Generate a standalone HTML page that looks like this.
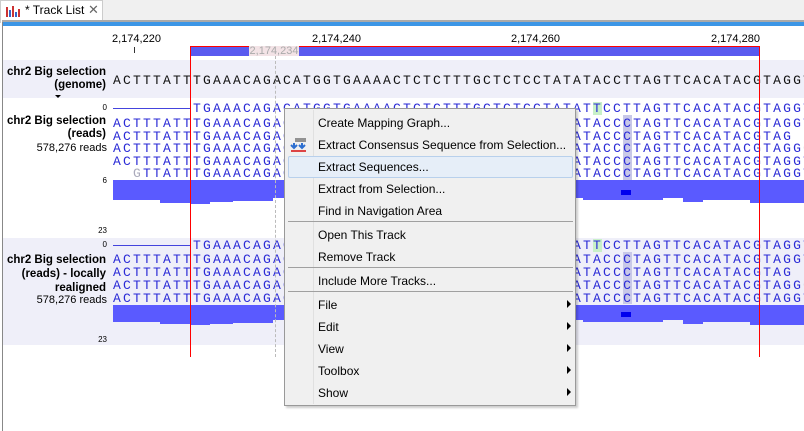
<!DOCTYPE html>
<html><head><style>
*{margin:0;padding:0;box-sizing:border-box}
body{width:804px;height:431px;overflow:hidden;background:#fff;font-family:"Liberation Sans",sans-serif;position:relative}
.a{position:absolute}
.seq{position:absolute;font-family:"Liberation Mono",monospace;font-size:13px;letter-spacing:2.2px;white-space:pre;line-height:13px;color:#2a2ad6}
.lbl{position:absolute;right:698px;text-align:right;font-size:11.5px;font-weight:bold;white-space:nowrap;line-height:13px}
.n{position:absolute;font-size:8px;right:697px;text-align:right;line-height:9px}
.r{position:absolute;font-size:11px;top:33px;line-height:12px}
.mi{position:absolute;left:318px;font-size:12px;color:#000;line-height:14px}
.sep{position:absolute;left:288px;width:285px;height:1px;background:#a0a0a0}
.ar{position:absolute;left:567px;width:0;height:0;border-left:4px solid #000;border-top:4px solid transparent;border-bottom:4px solid transparent}
</style></head><body>
<div class="a" style="left:0;top:0;width:804px;height:22px;background:#f0f0f0"></div>
<div class="a" style="left:0;top:0;width:103px;height:23px;background:#fff;border:1px solid #ccc;border-bottom:none"></div>
<svg class="a" style="left:5px;top:4px" width="16" height="14"><rect x="1" y="3" width="2" height="10" fill="#c33"/><rect x="4" y="6" width="2" height="7" fill="#36c"/><rect x="7" y="2" width="2" height="11" fill="#c33"/><rect x="10" y="8" width="2" height="5" fill="#36c"/><rect x="13" y="5" width="2" height="8" fill="#c33"/></svg>
<div class="a" style="left:25px;top:3px;font-size:12px;line-height:15px">* Track List</div>
<div class="a" style="left:88px;top:2px;font-size:13px;color:#666">✕</div>
<div class="a" style="left:2px;top:20px;width:802px;height:2px;background:#aaa"></div>
<div class="a" style="left:3px;top:22px;width:801px;height:4px;background:#3c96e6"></div>
<div class="a" style="left:2px;top:22px;width:1px;height:409px;background:#888"></div>

<div class="r" style="left:112px">2,174,220</div>
<div class="r" style="left:312px">2,174,240</div>
<div class="r" style="left:511px">2,174,260</div>
<div class="r" style="left:711px">2,174,280</div>
<div class="a" style="left:134px;top:47px;width:1px;height:6px;background:#333"></div>
<div class="a" style="left:190px;top:46px;width:570px;height:10px;background:#5a5aef;border-top:1px solid red"></div>
<div class="a" style="left:249px;top:46px;width:50px;height:10px;background:#f3e3e6;color:#aaa;font-size:11px;line-height:10px;text-align:center">2,174,234</div>

<div class="a" style="left:3px;top:60px;width:801px;height:38px;background:#efeff9"></div>
<div class="lbl" style="top:66px">chr2 Big selection<br>(genome)</div>
<div class="a" style="left:55px;top:95px;border-left:3px solid transparent;border-right:3px solid transparent;border-top:3px solid #000"></div>
<div class="seq" style="left:113px;top:74px;color:#111">ACTTTATTTGAAACAGACATGGTGAAAACTCTCTTTGCTCTCCTATATACCTTAGTTCACATACGTAGGT</div>

<div class="n" style="top:103px">0</div>
<div class="a" style="left:113px;top:108px;width:77px;height:1px;background:#4444dd"></div>
<div class="a" style="left:593px;top:102px;width:9px;height:13px;background:#c8f0c8"></div>
<div class="a" style="left:623px;top:115px;width:9px;height:65px;background:#c8c8e8"></div>
<div class="seq" style="left:193px;top:102px">TGAAACAGACATGGTGAAAACTCTCTTTGCTCTCCTATATTCCTTAGTTCACATACGTAGGT</div>
<div class="lbl" style="top:115px">chr2 Big selection<br>(reads)</div>
<div class="a" style="font-size:11px;right:697px;top:142px">578,276 reads</div>
<div class="seq" style="left:113px;top:117px">ACTTTATTTGAAACAGACATGGTGAAAACTCTCTTTGCTCTCCTATATACCCTAGTTCACATACGTAGGT</div>
<div class="seq" style="left:113px;top:130px">ACTTTATTTGAAACAGACATGGTGAAAACTCTCTTTGCTCTCCTATATACCCTAGTTCACATACGTAG</div>
<div class="seq" style="left:113px;top:142px">ACTTTATTTGAAACAGACATGGTGAAAACTCTCTTTGCTCTCCTATATACCCTAGTTCACATACGTAGG<span style="color:#aab">C</span></div>
<div class="seq" style="left:113px;top:155px">ACTTTATTTGAAACAGACATGGTGAAAACTCTCTTTGCTCTCCTATATACCCTAGTTCACATACGTAGGT</div>
<div class="seq" style="left:133px;top:167px"><span style="color:#aab">G</span>TTATTTGAAACAGACATGGTGAAAACTCTCTTTGCTCTCCTATATACCCTAGTTCACATACGTAGGT</div>
<div class="n" style="top:176px">6</div>
<svg class="a" style="left:113px;top:180px" width="691" height="26"><polygon fill="#5a5aff" points="0,0 691,0 691,23 637,23 637,20 590,20 590,22 570,22 570,18 550,18 550,20 470,20 470,18 160,18 160,21 120,21 120,22 97,22 97,24 77,24 77,23 47,23 47,20 0,20"/><rect x="508" y="10" width="10" height="5" fill="#0000ee"/></svg>
<div class="n" style="top:226px">23</div>

<div class="a" style="left:3px;top:238px;width:801px;height:107px;background:#efeff9"></div>
<div class="n" style="top:240px">0</div>
<div class="a" style="left:113px;top:245px;width:77px;height:1px;background:#4444dd"></div>
<div class="a" style="left:593px;top:239px;width:9px;height:13px;background:#c8f0c8"></div>
<div class="a" style="left:623px;top:252px;width:9px;height:52px;background:#c8c8e8"></div>
<div class="seq" style="left:193px;top:239px">TGAAACAGACATGGTGAAAACTCTCTTTGCTCTCCTATATTCCTTAGTTCACATACGTAGGT</div>
<div class="lbl" style="top:253px;line-height:14px">chr2 Big selection<br>(reads) - locally<br>realigned</div>
<div class="a" style="font-size:11px;right:697px;top:294px">578,276 reads</div>
<div class="seq" style="left:113px;top:253px">ACTTTATTTGAAACAGACATGGTGAAAACTCTCTTTGCTCTCCTATATACCCTAGTTCACATACGTAGGT</div>
<div class="seq" style="left:113px;top:266px">ACTTTATTTGAAACAGACATGGTGAAAACTCTCTTTGCTCTCCTATATACCCTAGTTCACATACGTAG</div>
<div class="seq" style="left:113px;top:279px">ACTTTATTTGAAACAGACATGGTGAAAACTCTCTTTGCTCTCCTATATACCCTAGTTCACATACGTAGG<span style="color:#aab">C</span></div>
<div class="seq" style="left:113px;top:292px">ACTTTATTTGAAACAGACATGGTGAAAACTCTCTTTGCTCTCCTATATACCCTAGTTCACATACGTAGGT</div>
<svg class="a" style="left:113px;top:305px" width="691" height="22"><polygon fill="#5a5aff" points="0,0 691,0 691,20 637,20 637,17 590,17 590,19 570,19 570,15 550,15 550,17 470,17 470,15 160,15 160,18 120,18 120,19 97,19 97,20 77,20 77,19 47,19 47,17 0,17"/><rect x="508" y="7" width="10" height="5" fill="#0000ee"/></svg>
<div class="n" style="top:335px">23</div>

<div class="a" style="left:190px;top:46px;width:1px;height:311px;background:#f00"></div>
<div class="a" style="left:759px;top:46px;width:1px;height:311px;background:#f00"></div>
<div class="a" style="left:275px;top:56px;width:0;height:301px;border-left:1px dashed #bbb"></div>

<div class="a" style="left:284px;top:108px;width:292px;height:298px;background:#f0f0f0;border:1px solid #999;box-shadow:2px 2px 2px rgba(0,0,0,.2)"></div>
<div class="a" style="left:313px;top:110px;width:1px;height:294px;background:#e0e0e0"></div>
<div class="a" style="left:288px;top:156px;width:285px;height:22px;background:#e6eef8;border:1px solid #b8d0ec;border-radius:2px"></div>
<svg class="a" style="left:290px;top:137px" width="18" height="16"><path d="M5 2h11M5 4h11" stroke="#333" stroke-width="1"/><path d="M4 6v4M1 8l3 3 3-3M12 6v4M9 8l3 3 3-3" stroke="#2d6fd0" stroke-width="2" fill="none"/><rect x="1" y="13" width="15" height="2" fill="#d44"/></svg>
<div class="mi" style="top:116px">Create Mapping Graph...</div>
<div class="mi" style="top:138px">Extract Consensus Sequence from Selection...</div>
<div class="mi" style="top:160px">Extract Sequences...</div>
<div class="mi" style="top:182px">Extract from Selection...</div>
<div class="mi" style="top:204px">Find in Navigation Area</div>
<div class="sep" style="top:221px"></div>
<div class="mi" style="top:228px">Open This Track</div>
<div class="mi" style="top:250px">Remove Track</div>
<div class="sep" style="top:267px"></div>
<div class="mi" style="top:274px">Include More Tracks...</div>
<div class="sep" style="top:291px"></div>
<div class="mi" style="top:298px">File</div><div class="ar" style="top:300px"></div>
<div class="mi" style="top:320px">Edit</div><div class="ar" style="top:322px"></div>
<div class="mi" style="top:342px">View</div><div class="ar" style="top:344px"></div>
<div class="mi" style="top:364px">Toolbox</div><div class="ar" style="top:366px"></div>
<div class="mi" style="top:386px">Show</div><div class="ar" style="top:388px"></div>
</body></html>
